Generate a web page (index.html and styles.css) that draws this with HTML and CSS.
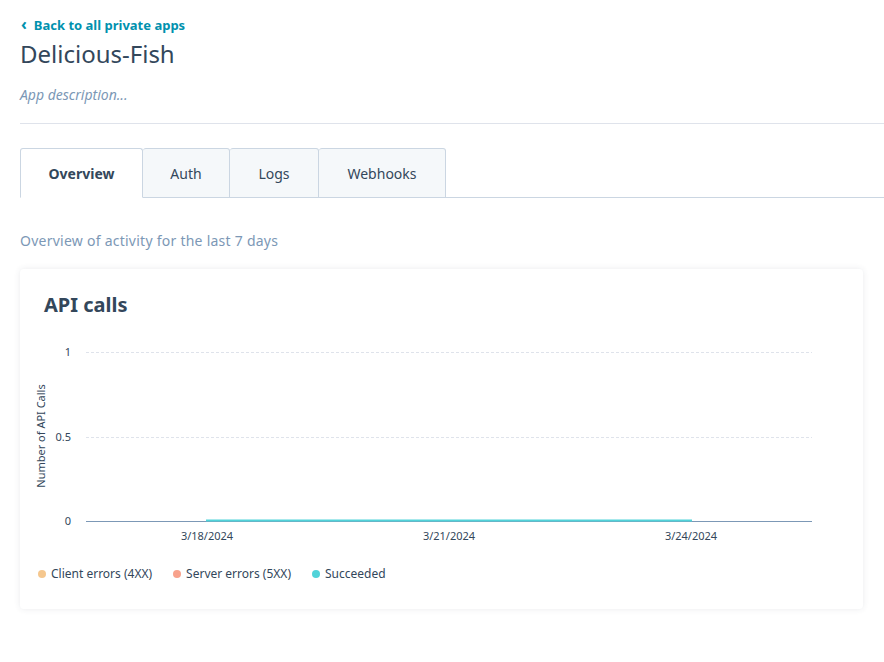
FILE: index.html
```html
<!DOCTYPE html>
<html lang="en">
<head>
<meta charset="utf-8">
<title>Delicious-Fish</title>
<link rel="stylesheet" href="styles.css">
</head>
<body>
<div class="page">
  <a class="back" href="#"><span class="chev">&#8249;</span>Back to all private apps</a>
  <h1 class="title">Delicious-Fish</h1>
  <p class="desc">App description...</p>
  <hr class="rule">
  <div class="tabs">
    <div class="tab active">Overview</div>
    <div class="tab">Auth</div>
    <div class="tab">Logs</div>
    <div class="tab">Webhooks</div>
    <div class="tab-rest"></div>
  </div>
  <p class="subtitle">Overview of activity for the last 7 days</p>
  <section class="card">
    <h2 class="card-title">API calls</h2>
    <svg class="chart" width="843" height="225" viewBox="0 0 843 225">
      <g class="grid">
        <line x1="66" y1="23.5" x2="792" y2="23.5"/>
        <line x1="66" y1="108.5" x2="792" y2="108.5"/>
      </g>
      <line class="axis" x1="66" y1="192.5" x2="792" y2="192.5"/>
      <line class="series" x1="186" y1="191.5" x2="672" y2="191.5"/>
      <g class="ytick">
        <text x="51" y="27">1</text>
        <text x="51" y="112">0.5</text>
        <text x="51" y="196">0</text>
      </g>
      <text class="ytitle" transform="translate(25 107) rotate(-90)">Number of API Calls</text>
      <g class="xtick">
        <text x="187" y="211">3/18/2024</text>
        <text x="429" y="211">3/21/2024</text>
        <text x="671" y="211">3/24/2024</text>
      </g>
    </svg>
    <div class="legend">
      <span class="item"><span class="dot client"></span>Client errors (4XX)</span>
      <span class="item"><span class="dot server"></span>Server errors (5XX)</span>
      <span class="item"><span class="dot ok"></span>Succeeded</span>
    </div>
  </section>
</div>
</body>
</html>
```

FILE: styles.css
```css
* { box-sizing: border-box; }
html, body { margin: 0; padding: 0; background: #fff; }
body {
  font-family: "Noto Sans", "DejaVu Sans", sans-serif;
  color: #33475b;
}
.page {
  padding: 16px 0 40px 20px;
  display: flex;
  flex-direction: column;
  align-items: flex-start;
}
.back {
  color: #0091ae;
  font-weight: 700;
  font-size: 13px;
  line-height: 18px;
  text-decoration: none;
  display: flex;
  align-items: center;
  gap: 7px;
  margin-left: 1px;
}
.chev { font-size: 16px; line-height: 18px; margin-top: -2px; }
.title {
  margin: 4px 0 0;
  font-size: 24px;
  font-weight: 400;
  line-height: 32px;
  color: #33475b;
}
.desc {
  margin: 15px 0 0;
  font-size: 14px;
  font-style: italic;
  line-height: 20px;
  color: #7c98b6;
}
.rule {
  align-self: stretch;
  margin: 18px 0 0;
  border: 0;
  border-top: 1px solid #dfe3eb;
  height: 0;
}
.tabs {
  align-self: stretch;
  display: flex;
  margin-top: 24px;
  height: 50px;
}
.tab {
  height: 50px;
  display: flex;
  align-items: center;
  justify-content: center;
  font-size: 14px;
  background: #f5f8fa;
  border: 1px solid #cbd6e2;
  border-left: 0;
  border-radius: 3px 3px 0 0;
  color: #33475b;
}
.tab.active {
  background: #fff;
  border-left: 1px solid #cbd6e2;
  border-bottom-color: #fff;
  font-weight: 700;
  width: 123px;
}
.tab:nth-child(2) { width: 87px; }
.tab:nth-child(3) { width: 89px; }
.tab:nth-child(4) { width: 127px; }
.tab-rest { flex: 1; border-bottom: 1px solid #cbd6e2; }
.subtitle {
  margin: 33px 0 0;
  font-size: 14px;
  line-height: 20px;
  letter-spacing: 0.25px;
  color: #7c98b6;
}
.card {
  margin-top: 18px;
  width: 843px;
  height: 340px;
  background: #fff;
  border-radius: 4px;
  box-shadow: 0 0 6px rgba(45, 62, 80, 0.10);
  padding: 24px 0 0;
}
.card-title {
  margin: 0 0 12px 24px;
  font-size: 20px;
  font-weight: 700;
  line-height: 24px;
  color: #33475b;
}
.chart { display: block; font-family: "Noto Sans", "DejaVu Sans", sans-serif; }
.grid line { stroke: #dfe3eb; stroke-width: 1; stroke-dasharray: 3 2; }
.axis { stroke: #7c98b6; stroke-width: 1; }
.series { stroke: #51d3d9; stroke-width: 2; }
.ytick text { font-size: 11px; fill: #33475b; text-anchor: end; }
.xtick text { font-size: 11px; fill: #33475b; text-anchor: middle; }
.ytitle { font-size: 11px; fill: #33475b; text-anchor: middle; }
.legend {
  display: flex;
  gap: 21px;
  margin: 12px 0 0 18px;
  font-size: 12px;
  line-height: 16px;
  color: #33475b;
}
.item { display: flex; align-items: center; gap: 5px; }
.dot { width: 8px; height: 8px; border-radius: 50%; display: inline-block; }
.dot.client { background: #f5c78e; }
.dot.server { background: #f8a28c; }
.dot.ok { background: #51d3d9; }
```
